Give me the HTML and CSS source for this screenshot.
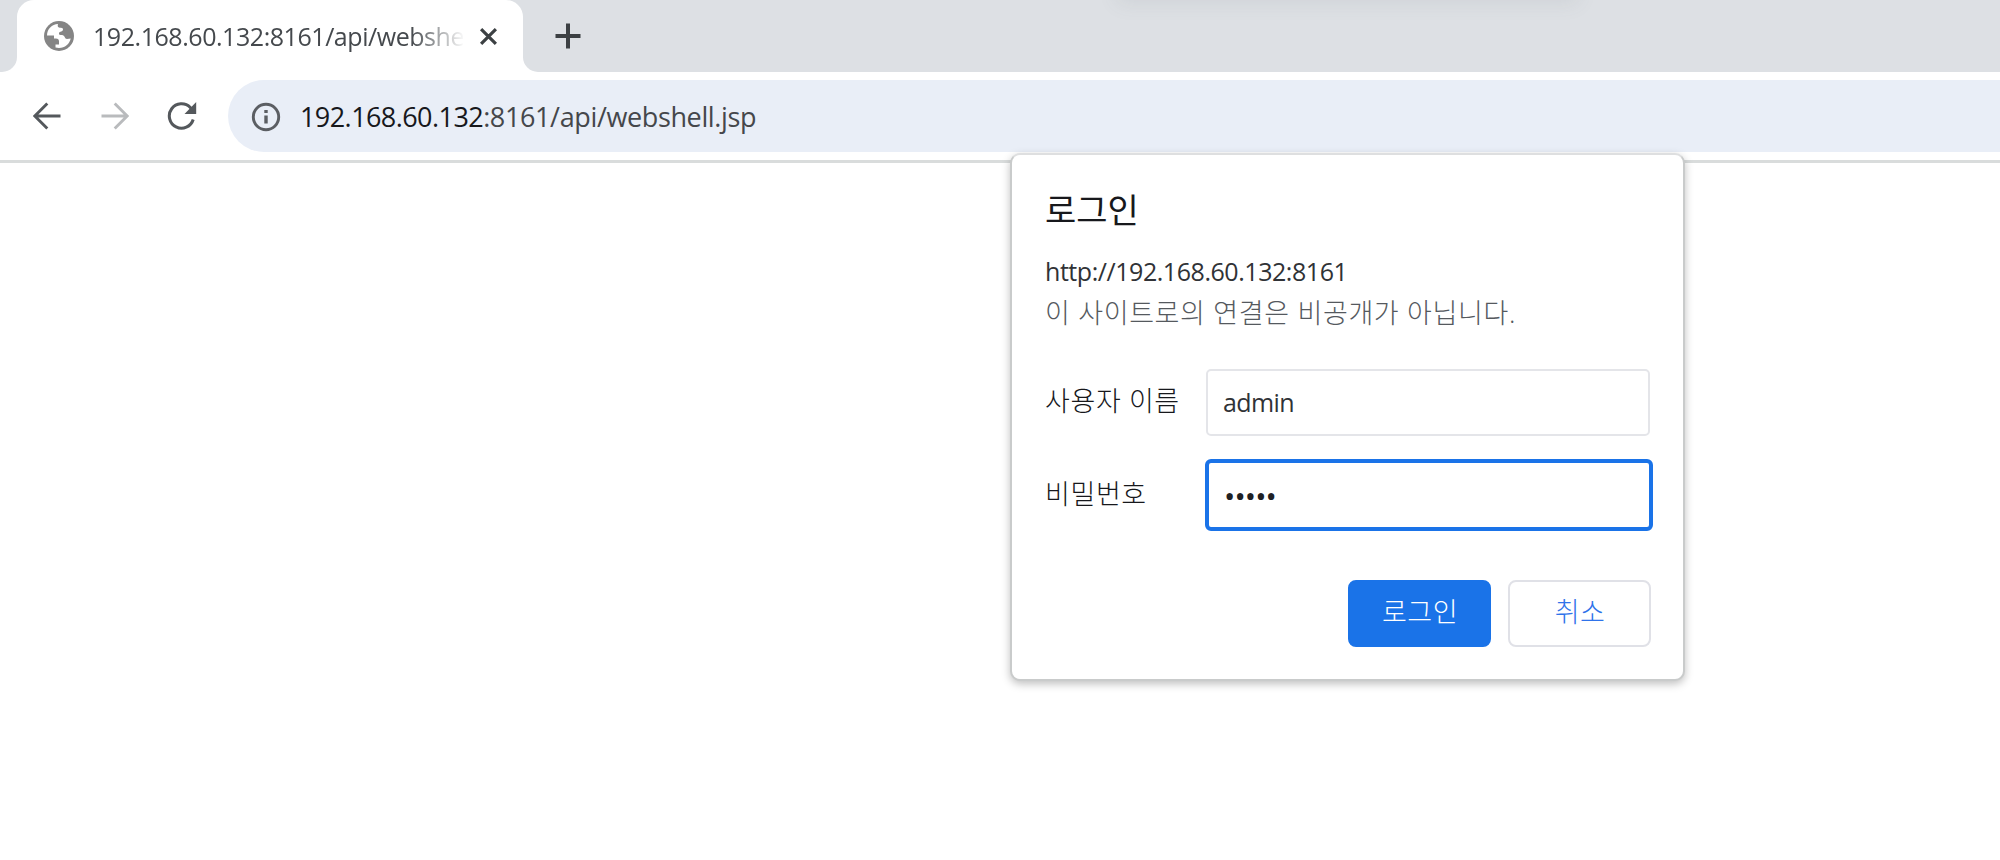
FILE: index.html
```html
<!DOCTYPE html>
<html lang="ko">
<head>
<meta charset="utf-8">
<title>192.168.60.132:8161/api/webshell.jsp</title>
<link rel="stylesheet" href="styles.css">
</head>
<body>
<div class="browser">
  <header class="tabstrip">
    <div class="edge edge-left"></div>
    <div class="tab-slot">
      <div class="tab">
        <svg class="favicon" width="30" height="30" viewBox="0 0 30 30"><circle cx="15" cy="15" r="15" fill="#858585"/><path d="M3 14.5C3 8 8 3.300 14 3C13.500 5 13.500 6 15 6.500C17 7 19 6.500 19 8.500C19 11 15.500 10 15 12C14.600 14 16 14 18 14C21 14 20.500 18 23 18L26.700 17.500C25.500 23 21 27 15 27C14 27 12.500 26.800 11.500 26.500V23.500H15V20.500C15 18.500 14 17.800 12 17.600L10 17.500V14.500Z" fill="#fff"/></svg>
        <span class="tab-title">192.168.60.132:8161/api/webshe</span>
        <svg class="close" width="19" height="19" viewBox="0 0 18 18"><path d="M2 2L16 16M16 2L2 16" stroke="#3c4043" stroke-width="3"/></svg>
      </div>
    </div>
    <div class="edge edge-right">
      <svg width="26" height="26" viewBox="0 0 26 26"><path d="M13 .5V25.500M.5 13H25.500" stroke="#3c4043" stroke-width="4"/></svg>
    </div>
    <div class="top-shadow"></div>
  </header>
  <nav class="toolbar">
    <svg class="nav-icon" width="28" height="28" viewBox="0 0 28 28"><path d="M27.500 14H2M14.300 1.500L1.800 14L14.300 26.500" fill="none" stroke="#54585c" stroke-width="2.900"/></svg>
    <svg class="nav-icon" width="28" height="28" viewBox="0 0 28 28"><path d="M.5 14H26M13.700 1.500L26.200 14L13.700 26.500" fill="none" stroke="#b9bbbd" stroke-width="2.900"/></svg>
    <svg class="nav-icon reload" width="30" height="30" viewBox="0 0 30 30"><path d="M26.200 18.500A12.200 12.200 0 1 1 23.300 6.500L25 8.500" fill="none" stroke="#54585c" stroke-width="3"/><path d="M29.200 1V13H17.500Z" fill="#54585c"/></svg>
    <div class="omnibox">
      <svg width="30" height="30" viewBox="0 0 30 30"><circle cx="15" cy="15" r="12.700" fill="none" stroke="#5b5e63" stroke-width="2.900"/><path d="M15 13.500V21.500M15 8V11" stroke="#5b5e63" stroke-width="3.400"/></svg>
      <span class="url"><span class="host">192.168.60.132</span>:8161/api/webshell.jsp</span>
    </div>
  </nav>
  <main class="page"></main>
  <section class="dialog">
    <h1 class="title">로그인</h1>
    <p class="origin">http://192.168.60.132:8161</p>
    <p class="notice">이 사이트로의 연결은 비공개가 아닙니다.</p>
    <div class="row">
      <span class="label">사용자 이름</span>
      <div class="field">admin</div>
    </div>
    <div class="row row-password">
      <span class="label">비밀번호</span>
      <div class="field focused">•••••</div>
    </div>
    <div class="actions">
      <button class="button primary">로그인</button>
      <button class="button">취소</button>
    </div>
  </section>
</div>
</body>
</html>
```
FILE: styles.css
```css
* { box-sizing: border-box; }
body { margin: 0; font-family: "Open Sans", "Noto Sans CJK KR", sans-serif; }
.browser { position: relative; width: 2000px; height: 860px; overflow: hidden; background: #fff; display: flex; flex-direction: column; }
.tabstrip { position: relative; display: flex; height: 72px; overflow: hidden; background: #fff; }
.edge { background: #dde0e4; }
.edge-left { width: 17px; border-bottom-right-radius: 15px; }
.tab-slot { width: 506px; background: linear-gradient(#dde0e4 50%, #fff 50%); }
.tab { height: 72px; display: flex; align-items: center; background: #fff; border-radius: 17px 17px 0 0; }
.favicon { margin-left: 27px; }
.tab-title { margin-left: 19px; width: 370px; white-space: nowrap; font-size: 25px; line-height: 40px; letter-spacing: -0.450px; color: #45494d; -webkit-mask-image: linear-gradient(90deg, #000 318px, transparent 372px); mask-image: linear-gradient(90deg, #000 318px, transparent 372px); }
.close { margin-left: 16px; }
.edge-right { flex: 1; border-bottom-left-radius: 15px; padding: 23px 0 0 32px; }
.top-shadow { position: absolute; left: 1120px; top: -20px; width: 455px; height: 20px; box-shadow: 0 0 20px 3px rgba(90, 100, 105, .1); }
.toolbar { height: 91px; display: flex; align-items: flex-start; padding: 8px 0 0 33px; border-bottom: 3px solid #d9dcdc; }
.nav-icon { margin: 22px 39.500px 0 0; }
.nav-icon.reload { margin: 21px 31px 0 -1px; }
.omnibox { flex: 1; height: 72px; display: flex; align-items: center; padding: 2px 0 0 23px; background: #e9eef7; border-radius: 36px 0 0 36px; }
.url { margin-left: 19px; font-size: 27px; line-height: 40px; letter-spacing: -0.370px; color: #45474b; white-space: nowrap; }
.host { letter-spacing: -0.570px; color: #17181c; }
.page { flex: 1; background: #fff; }
.dialog { position: absolute; left: 1010px; top: 153px; width: 675px; height: 528px; padding: 34px 32px 0 33px; background: #fff; border: 2px solid #c9cbcb; border-top-color: #dedfe0; border-radius: 10px; box-shadow: 0 3px 8px rgba(0, 0, 0, .25); display: flex; flex-direction: column; }
.title { margin: 0; height: 42px; font-size: 34px; line-height: 42px; font-weight: 400; color: #17181c; }
.origin { margin: 20px 0 0; height: 40px; font-size: 25px; line-height: 40px; letter-spacing: -0.450px; color: #303236; white-space: nowrap; }
.notice { margin: 0; height: 40px; font-size: 27px; line-height: 43px; letter-spacing: 0.650px; font-weight: 300; color: #55595e; white-space: nowrap; }
.row { display: flex; margin-top: 38px; height: 67px; }
.row-password { margin-top: 26px; }
.label { flex: 0 0 161px; font-size: 27px; line-height: 63px; letter-spacing: 0.600px; font-weight: 300; color: #17181c; white-space: nowrap; }
.field { flex: 0 0 444px; height: 67px; padding-left: 15px; border: 2px solid #e4e5e9; border-radius: 5px; font-size: 25px; line-height: 62px; letter-spacing: -0.600px; color: #303236; }
.focused { flex-basis: 448px; margin: -3px 0 0 -1px; height: 72px; border: 4px solid #1a73e8; border-radius: 6px; font-size: 30px; line-height: 66px; letter-spacing: -0.900px; color: #202124; }
.actions { display: flex; justify-content: flex-end; gap: 17px; margin: 51px 0 0; }
.button { width: 143px; height: 67px; padding: 0 0 5px 1px; border: 2px solid #e0e1e7; border-radius: 8px; background: #fff; color: #2f73ea; font: 300 27px/58px "Noto Sans CJK KR", sans-serif; letter-spacing: 0.500px; }
.primary { background: #1a73e8; border-color: #1a73e8; color: #fff; }
```
